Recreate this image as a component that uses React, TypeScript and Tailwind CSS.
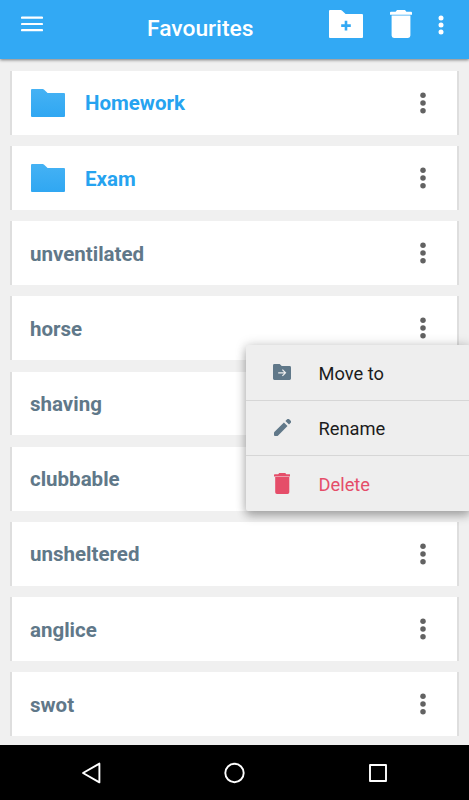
import type { ReactNode } from "react";

type Item = { name: string; folder?: boolean };

const items: Item[] = [
  { name: "Homework", folder: true },
  { name: "Exam", folder: true },
  { name: "unventilated" },
  { name: "horse" },
  { name: "shaving" },
  { name: "clubbable" },
  { name: "unsheltered" },
  { name: "anglice" },
  { name: "swot" },
];

function FolderIcon() {
  return (
    <svg width="34" height="28" viewBox="0 0 34 28" className="shrink-0">
      <defs>
        <linearGradient id="folder" x1="0" y1="0" x2="0" y2="1">
          <stop offset="0" stopColor="#45b2f4" />
          <stop offset="1" stopColor="#30a7f2" />
        </linearGradient>
      </defs>
      <path d="M1 0h10.7q.7 0 1.2.5L16.6 4H33q1 0 1 1v22q0 1-1 1H1q-1 0-1-1V1q0-1 1-1z" fill="url(#folder)" />
    </svg>
  );
}

function NewFolderIcon() {
  return (
    <svg width="34" height="28" viewBox="0 0 34 28" fill="#fff">
      <path d="M1 0h10.7q.7 0 1.2.5L16.6 4H33q1 0 1 1v22q0 1-1 1H1q-1 0-1-1V1q0-1 1-1z" />
      <path d="M17 10.8v9.6M12.2 15.6h9.6" stroke="#32a9f4" strokeWidth="2.6" />
    </svg>
  );
}

function TrashIcon({ className }: { className: string }) {
  return (
    <svg viewBox="0 0 22 28" fill="currentColor" className={className}>
      <path d="M7 0h8l1.4 1.8H21q1 0 1 1v2H0v-2q0-1 1-1h4.6zM1.6 5.4h18.8v20.2q0 2.4-2.4 2.4H4q-2.4 0-2.4-2.4z" />
    </svg>
  );
}

function Dots({ className }: { className: string }) {
  return (
    <svg viewBox="0 0 6 22" fill="currentColor" className={className}>
      <circle cx="3" cy="3.2" r="2.75" />
      <circle cx="3" cy="11" r="2.75" />
      <circle cx="3" cy="18.8" r="2.75" />
    </svg>
  );
}

function Row({ item }: { item: Item }) {
  return (
    <div className="flex h-[63.8px] shrink-0 items-center border-x-2 border-[#dedede] bg-white pr-[31px] pl-[18px]">
      {item.folder && (
        <div className="ml-px">
          <FolderIcon />
        </div>
      )}
      <span
        className={
          item.folder
            ? "ml-5 pt-[2px] text-[20.5px] font-bold text-[#26a3f0]"
            : "pt-[2px] text-[20.5px] font-bold text-[#607889]"
        }
      >
        {item.name}
      </span>
      <Dots className="ml-auto h-[22px] w-[6px] text-[#626262]" />
    </div>
  );
}

function MenuItem({ icon, label, danger }: { icon: ReactNode; label: string; danger?: boolean }) {
  return (
    <div className="flex h-[55.2px] items-center border-b border-[#d6d6d6] last:border-b-0">
      <div className="ml-[26.5px] flex w-5 justify-center text-[#607889]">{icon}</div>
      <span className={danger ? "ml-[26.5px] pt-[2px] text-[#e54d69]" : "ml-[26.5px] pt-[2px] text-[#1c1c1c]"}>{label}</span>
    </div>
  );
}

export default function App() {
  return (
    <div className="relative flex h-[800px] w-[469px] flex-col overflow-hidden bg-[#f0f0f0] font-['Roboto',sans-serif]">
      <header className="z-10 flex h-[59px] shrink-0 bg-[#32a9f4] text-white shadow-[0_1px_3px_rgba(0,0,0,0.5)]">
        <svg width="22" height="16" viewBox="0 0 22 16" stroke="#fff" strokeWidth="2.2" strokeLinecap="round" className="mt-4 ml-[21px]">
          <path d="M1 1.6h20M1 8h20M1 14.1h20" />
        </svg>
        <h1 className="mt-[14px] ml-[104px] w-[182px] text-[22.8px] leading-[30px] font-medium">Favourites</h1>
        <div className="mt-[10px] flex">
          <NewFolderIcon />
          <TrashIcon className="ml-[26.5px] h-7 w-[22px]" />
          <Dots className="mt-[4.5px] ml-[26.5px] h-5 w-[6px]" />
        </div>
      </header>

      <main className="flex flex-1 flex-col gap-[11.4px] px-[10px] pt-[11.8px]">
        {items.map((item) => (
          <Row key={item.name} item={item} />
        ))}
      </main>

      <nav className="flex h-[55px] shrink-0 items-center bg-black px-[81px]">
        <svg width="20" height="22" viewBox="0 0 20 22" fill="none" stroke="#fff" strokeWidth="1.9" strokeLinejoin="round">
          <path d="M2 11 18.4 1.6v18.8z" />
        </svg>
        <svg width="22" height="22" viewBox="0 0 22 22" fill="none" stroke="#fff" strokeWidth="1.9" className="ml-[122px]">
          <circle cx="11.5" cy="11" r="9.2" />
        </svg>
        <svg width="20" height="20" viewBox="0 0 20 20" fill="none" stroke="#fff" strokeWidth="1.9" strokeLinejoin="round" className="ml-[122.5px]">
          <path d="M2 2h16v16H2z" />
        </svg>
      </nav>

      <div className="absolute top-[345.4px] left-[245.5px] z-20 w-[224px] rounded-[2px] bg-[#eee] text-[18.3px] shadow-[0_5px_10px_rgba(0,0,0,0.25),0_0_12px_rgba(0,0,0,0.18)]">
        <MenuItem
          label="Move to"
          icon={
            <svg width="18" height="16" viewBox="0 0 18 16" fill="currentColor">
              <path d="M1.4 0h5.3l2 2h7.9Q18 2 18 3.4v11.2q0 1.4-1.4 1.4H1.4Q0 16 0 14.6V1.4Q0 0 1.4 0z" />
              <path d="M5.2 8.8h7.2M9.4 5.7l3.1 3.1-3.1 3.1" fill="none" stroke="#eee" strokeWidth="1.2" />
            </svg>
          }
        />
        <MenuItem
          label="Rename"
          icon={
            <svg width="17" height="17" viewBox="3 3 18 18" fill="currentColor">
              <path d="M3.6 16.6 13.5 6.7l3.8 3.8-9.9 9.9Q6.8 21 6 21H4q-1 0-1-1v-2q0-.8.6-1.4zM20.7 7.1a1.6 1.6 0 0 0 0-2.2l-1.6-1.6a1.6 1.6 0 0 0-2.2 0l-1.8 1.8 3.8 3.8z" />
            </svg>
          }
        />
        <MenuItem label="Delete" danger icon={<TrashIcon className="h-[21px] w-[16.5px] text-[#e54d69]" />} />
      </div>
    </div>
  );
}
